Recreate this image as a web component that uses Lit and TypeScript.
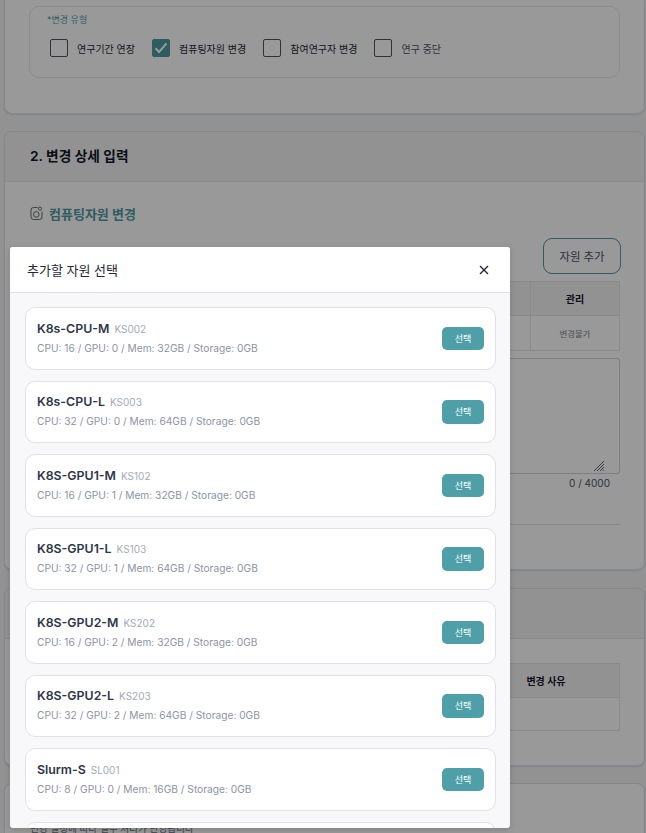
import { LitElement, html, css, svg } from "lit";
import { customElement } from "lit/decorators.js";

const ITEMS = [
  ["K8s-CPU-M", "KS002", "CPU: 16 / GPU: 0 / Mem: 32GB / Storage: 0GB"],
  ["K8s-CPU-L", "KS003", "CPU: 32 / GPU: 0 / Mem: 64GB / Storage: 0GB"],
  ["K8S-GPU1-M", "KS102", "CPU: 16 / GPU: 1 / Mem: 32GB / Storage: 0GB"],
  ["K8S-GPU1-L", "KS103", "CPU: 32 / GPU: 1 / Mem: 64GB / Storage: 0GB"],
  ["K8S-GPU2-M", "KS202", "CPU: 16 / GPU: 2 / Mem: 32GB / Storage: 0GB"],
  ["K8S-GPU2-L", "KS203", "CPU: 32 / GPU: 2 / Mem: 64GB / Storage: 0GB"],
  ["Slurm-S", "SL001", "CPU: 8 / GPU: 0 / Mem: 16GB / Storage: 0GB"],
  ["Slurm-M", "SL002", "CPU: 16 / GPU: 0 / Mem: 32GB / Storage: 0GB"],
];

@customElement("app-root")
export class AppRoot extends LitElement {
  static styles = css`
    :host {
      display: block;
      position: relative;
      width: 646px;
      height: 833px;
      overflow: hidden;
      background: #f3f4f6;
      font-family: Inter, "Noto Sans CJK KR", sans-serif;
      color: #1f2937;
    }
    * { box-sizing: border-box; }
    .page { display: flex; flex-direction: column; padding: 0 1px 0 4px; }
    .sec {
      background: #fff;
      border: 1px solid #dfe1e6;
      border-radius: 8px;
      box-shadow: 0 1px 2px rgba(0,0,0,.1);
      overflow: hidden;
      flex: none;
    }
    .s1 { height: 114px; margin-bottom: 17px; border-top: 0; border-radius: 0 0 8px 8px; padding: 6px 24px 0; }
    .s2 { height: 439px; margin-bottom: 18px; }
    .s3 { height: 178px; margin-bottom: 17px; }
    .s4 { height: 60px; }
    .typebox {
      height: 72px;
      border: 1px solid #e8eaee;
      border-radius: 10px;
      padding: 7px 17px 0;
    }
    .req { font-size: 9px; line-height: 11px; color: #4f9fa8; margin-bottom: 14px; }
    .checks { display: flex; align-items: center; padding-left: 3px; }
    .chk { display: flex; align-items: center; gap: 9px; margin-right: 17px; font-size: 10px; color: #1f2937; }
    .chk:last-child { color: #4b5563; }
    .box {
      width: 18px; height: 18px;
      border: 1px solid #4b5563;
      border-radius: 2px;
      background: #fff;
      display: flex; align-items: center; justify-content: center;
    }
    .box.on { border-color: #4f9aa1; background: #4f9aa1; }
    .head {
      height: 50px;
      background: #f3f4f6;
      border-bottom: 1px solid #e5e7eb;
      padding: 0 25px 3px;
      display: flex; align-items: center;
      font-size: 13.7px; font-weight: 600; color: #111827;
    }
    .body2 { padding: 21px 24px 0 25px; display: flex; flex-direction: column; }
    .sub { display: flex; align-items: center; gap: 6px; font-size: 13px; font-weight: 600; color: #4f9aa1; height: 20px; }
    .addrow { display: flex; justify-content: flex-end; margin: 15px -1px 0 0; }
    .add {
      width: 78px; height: 36px;
      border: 1px solid #4f9aa1; border-radius: 9px;
      background: #fff; color: #4b5563;
      font: 400 11.4px Inter, "Noto Sans CJK KR", sans-serif;
      padding: 0;
    }
    .tbl { display: grid; grid-template-columns: 1fr 88px; margin-top: 7px; border: 1px solid #e5e7eb; height: 70px; grid-template-rows: 34px 1fr; }
    .th, .td { display: flex; align-items: center; justify-content: center; border-right: 1px solid #e5e7eb; }
    .th { background: #f3f4f6; font-size: 10px; font-weight: 700; color: #111827; border-bottom: 1px solid #e5e7eb; }
    .td { font-size: 8.4px; color: #7e838c; }
    .th:nth-child(2n), .td:nth-child(2n) { border-right: 0; }
    .ta {
      margin-top: 7px; height: 116px;
      border: 1px solid #d1d5db; border-radius: 3px;
      background: #fff; position: relative;
    }
    .grip { position: absolute; right: 15px; bottom: 2px; }
    .count { text-align: right; font-size: 10px; line-height: 14px; color: #4b5563; padding: 2px 10px 0 0; }
    .rule { border-top: 1px solid #e5e7eb; margin-top: 34px; }
    .s3 .body3 { padding: 24px 24px 0 25px; }
    .tbl3 { display: grid; grid-template-columns: 1fr 146px; height: 68px; grid-template-rows: 34px 1fr; border: 1px solid #e5e7eb; }
    .s4 .note { padding: 38px 25px 0; font-size: 9.6px; line-height: 14px; color: #6b7280; }

    .overlay { position: absolute; inset: 0; background: rgba(0,0,0,.4); }
    .modal {
      position: absolute; left: 10px; top: 247px; width: 500px; height: 581px;
      background: #f8f8fa; border-radius: 3px;
      display: flex; flex-direction: column; overflow: hidden;
      box-shadow: 0 2px 6px rgba(0,0,0,.15);
    }
    .mhead {
      flex: none; height: 46px; background: #fff;
      border-bottom: 1px solid #dcdde3;
      display: flex; align-items: center; justify-content: space-between;
      padding: 0 21px 0 17px;
      font-size: 13px; font-weight: 400; color: #1f2937;
    }
    .x { display: block; }
    .list { flex: none; padding: 14px 14px 0 15px; display: flex; flex-direction: column; gap: 11px; }
    .item {
      flex: none; height: 62.5px;
      background: #fff;
      border: 1px solid #e0e0ea;
      border-radius: 10px;
      display: flex; align-items: center; justify-content: space-between;
      padding: 0 11px;
    }
    .info { padding-bottom: 1px; }
    .name { display: flex; align-items: baseline; gap: 5px; font-size: 12.35px; line-height: 16px; font-weight: 600; color: #2d3648; }
    .code { font-size: 10px; font-weight: 400; color: #a4abb8; }
    .spec { margin-top: 4px; font-size: 10.2px; line-height: 14px; color: #8c94a3; }
    .sel {
      width: 42px; height: 23.5px; border: 0; border-radius: 5px;
      background: #4f9fa8; color: #fff; padding: 0;
      font: 400 9px Inter, "Noto Sans CJK KR", sans-serif;
    }
  `;

  private tick() {
    return svg`<svg width="14" height="12" viewBox="0 0 14 12" fill="none"><path d="M1.5 6.2 5 10 12.5 1.5" stroke="#fff" stroke-width="2"/></svg>`;
  }

  render() {
    const labels = [["연구기간 연장", false], ["컴퓨팅자원 변경", true], ["참여연구자 변경", false], ["연구 중단", false]] as const;
    return html`
      <div class="page">
        <section class="sec s1">
          <div class="typebox">
            <div class="req">*변경 유형</div>
            <div class="checks">
              ${labels.map(([t, on]) => html`<label class="chk"><span class="box ${on ? "on" : ""}">${on ? this.tick() : ""}</span>${t}</label>`)}
            </div>
          </div>
        </section>
        <section class="sec s2">
          <div class="head">2. 변경 상세 입력</div>
          <div class="body2">
            <div class="sub">
              <svg width="13" height="14" viewBox="0 0 13 14" fill="none" stroke="#5f7275" stroke-width="1">
                <path d="M7.5 1.5H3.5A2.5 2.5 0 0 0 1 4v7a2.5 2.5 0 0 0 2.5 2.5h6A2.5 2.5 0 0 0 12 11V5.5"/>
                <circle cx="6.3" cy="8.4" r="2.8"/><circle cx="10" cy="2.6" r="1.6"/>
              </svg>
              컴퓨팅자원 변경
            </div>
            <div class="addrow"><button class="add">자원 추가</button></div>
            <div class="tbl">
              <div class="th"></div><div class="th">관리</div>
              <div class="td"></div><div class="td">변경불가</div>
            </div>
            <div class="ta">
              <svg class="grip" width="10" height="10" viewBox="0 0 10 10" stroke="#444" stroke-width=".8"><path d="M0 10 10 0M3 10l7-7M6 10l4-4M8.5 10 10 8.5"/></svg>
            </div>
            <div class="count">0 / 4000</div>
            <div class="rule"></div>
          </div>
        </section>
        <section class="sec s3">
          <div class="head"></div>
          <div class="body3">
            <div class="tbl3">
              <div class="th"></div><div class="th">변경 사유</div>
              <div class="td"></div><div class="td"></div>
            </div>
          </div>
        </section>
        <section class="sec s4"><div class="note">변경 일정에 따라 일부 처리가 반영됩니다</div></section>
      </div>
      <div class="overlay">
        <div class="modal">
          <div class="mhead">
            <span>추가할 자원 선택</span>
            <svg class="x" width="10" height="10" viewBox="0 0 10 10" fill="none" stroke="#1f2a3c" stroke-width="1.4"><path d="M1 1l8 8M9 1 1 9"/></svg>
          </div>
          <div class="list">
            ${ITEMS.map(([n, c, s]) => html`
              <div class="item">
                <div class="info">
                  <div class="name">${n}<span class="code">${c}</span></div>
                  <div class="spec">${s}</div>
                </div>
                <button class="sel">선택</button>
              </div>`)}
          </div>
        </div>
      </div>
    `;
  }
}
